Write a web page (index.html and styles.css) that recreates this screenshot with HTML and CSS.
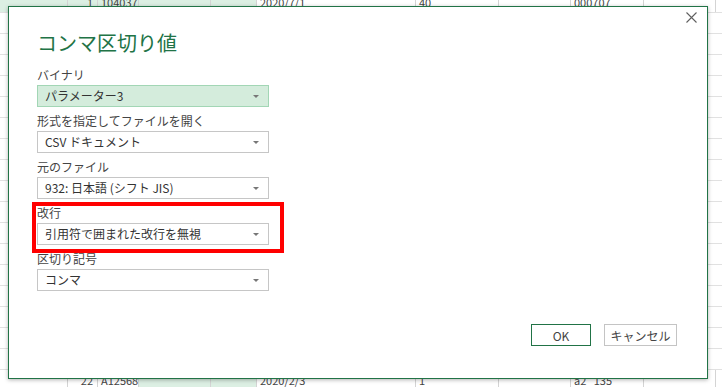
FILE: index.html
```html
<!DOCTYPE html>
<html lang="ja">
<head>
    <meta charset="UTF-8">
    <meta name="viewport" content="width=device-width, initial-scale=1.0">
    <title>コンマ区切り値</title>
    <link rel="stylesheet" href="styles.css">
</head>
<body>

    <!-- spreadsheet behind the dialog -->
    <div class="sheet">
        <div class="sheet-row">
            <div class="cell w68 tint"></div>
            <div class="cell w30 tint num">1</div>
            <div class="cell w41 tint">104037</div>
            <div class="cell w72 tint"></div>
            <div class="cell w46 tint"></div>
            <div class="cell w159">2020/7/1</div>
            <div class="cell w83">40</div>
            <div class="cell w72"></div>
            <div class="cell w73">000707</div>
            <div class="cell w72"></div>
            <div class="cell rest"></div>
        </div>
        <div class="sheet-fill"></div>
        <div class="sheet-row">
            <div class="cell w68"></div>
            <div class="cell w30 num">22</div>
            <div class="cell w41">A12568</div>
            <div class="cell w72 tint"></div>
            <div class="cell w46 tint"></div>
            <div class="cell w159">2020/2/3</div>
            <div class="cell w83">1</div>
            <div class="cell w72"></div>
            <div class="cell w73">a2&nbsp;&nbsp;&nbsp;135</div>
            <div class="cell w72"></div>
            <div class="cell rest"></div>
        </div>
    </div>

    <div class="dialog">
        <button class="close-btn" title="閉じる">
            <svg width="11" height="11" viewBox="0 0 11 11">
                <path d="M0.5 0.5 L10.5 10.5 M10.5 0.5 L0.5 10.5" stroke="#5f5f5f" stroke-width="1.1" fill="none"/>
            </svg>
        </button>

        <h1 class="dialog-title">コンマ区切り値</h1>

        <div class="field">
            <div class="field-label">バイナリ</div>
            <div class="dropdown selected"><span>パラメーター3</span><i class="arrow"></i></div>
        </div>
        <div class="field">
            <div class="field-label">形式を指定してファイルを開く</div>
            <div class="dropdown"><span>CSV ドキュメント</span><i class="arrow"></i></div>
        </div>
        <div class="field">
            <div class="field-label">元のファイル</div>
            <div class="dropdown"><span>932: 日本語 (シフト JIS)</span><i class="arrow"></i></div>
        </div>
        <div class="field">
            <div class="field-label">改行</div>
            <div class="dropdown"><span>引用符で囲まれた改行を無視</span><i class="arrow"></i></div>
        </div>
        <div class="field">
            <div class="field-label">区切り記号</div>
            <div class="dropdown"><span>コンマ</span><i class="arrow"></i></div>
        </div>

        <!-- annotation box -->
        <div class="highlight"></div>

        <div class="dialog-footer">
            <button class="btn btn-ok">OK</button>
            <button class="btn btn-cancel">キャンセル</button>
        </div>
    </div>

</body>
</html>
```

FILE: styles.css
```css
body {
    margin: 0;
    width: 722px;
    height: 387px;
    overflow: hidden;
    position: relative;
    background: #ffffff;
    font-family: "Noto Sans CJK JP", "Noto Sans", sans-serif;
}

/* background sheet */
.sheet {
    display: flex;
    flex-direction: column;
    margin-top: -8px;
    height: 399px;
}
.sheet-row {
    display: flex;
    height: 21px;
    flex: none;
    border-bottom: 1px solid #e1e1e1;
    box-sizing: border-box;
}
.sheet-fill {
    height: 357px;
    flex: none;
    background: repeating-linear-gradient(to bottom, transparent 0 20px, #e1e1e1 20px 21px);
}
.cell {
    box-sizing: border-box;
    border-right: 1px solid #d4d4d4;
    font-size: 11px;
    line-height: 20px;
    color: #444;
    padding-left: 3px;
    white-space: nowrap;
    overflow: hidden;
}
.cell.num {
    text-align: right;
    padding-right: 4px;
}
.tint { background: #dcefe3; }
.w68 { width: 68px; }
.w30 { width: 30px; }
.w41 { width: 41px; }
.w72 { width: 72px; }
.w46 { width: 46px; }
.w159 { width: 159px; }
.w83 { width: 83px; }
.w73 { width: 73px; }
.rest { flex: 1; border-right: none; }

/* dialog */
.dialog {
    position: absolute;
    left: 8px;
    top: 6px;
    width: 700px;
    height: 373px;
    box-sizing: border-box;
    border: 1px solid #217346;
    background: #ffffff;
    box-shadow: 0 1px 4px rgba(0, 0, 0, 0.3);
    padding: 22px 30px 32px 28px;
    display: flex;
    flex-direction: column;
}
.close-btn {
    position: absolute;
    top: 5px;
    right: 10px;
    width: 11px;
    height: 11px;
    padding: 0;
    border: none;
    background: none;
    line-height: 0;
}
.dialog-title {
    margin: 0 0 9px 0;
    font-size: 20px;
    line-height: 28px;
    font-weight: normal;
    color: #217346;
}

.field {
    margin-bottom: 5px;
}
.field-label {
    font-size: 12px;
    line-height: 18px;
    color: #444;
}
.dropdown {
    margin-top: 1px;
    width: 232px;
    height: 22px;
    box-sizing: border-box;
    border: 1px solid #c6c6c6;
    padding: 0 9px 0 7px;
    font-size: 12px;
    line-height: 20px;
    color: #333;
    display: flex;
    align-items: center;
    justify-content: space-between;
}
.dropdown.selected {
    background: #d4ecdc;
    border-color: #a2d6b5;
}
.arrow {
    width: 0;
    height: 0;
    border-left: 3px solid transparent;
    border-right: 3px solid transparent;
    border-top: 3px solid #777;
}

.highlight {
    position: absolute;
    left: 23px;
    top: 195px;
    width: 252px;
    height: 51px;
    box-sizing: border-box;
    border: 4px solid #ff0000;
}

.dialog-footer {
    margin-top: auto;
    display: flex;
    justify-content: flex-end;
    gap: 13px;
}
.btn {
    height: 22px;
    box-sizing: border-box;
    background: #ffffff;
    font-family: inherit;
    font-size: 12px;
    color: #444;
    padding: 0;
}
.btn-ok {
    width: 60px;
    border: 1px solid #217346;
}
.btn-cancel {
    width: 73px;
    border: 1px solid #c4c4c4;
}
```
